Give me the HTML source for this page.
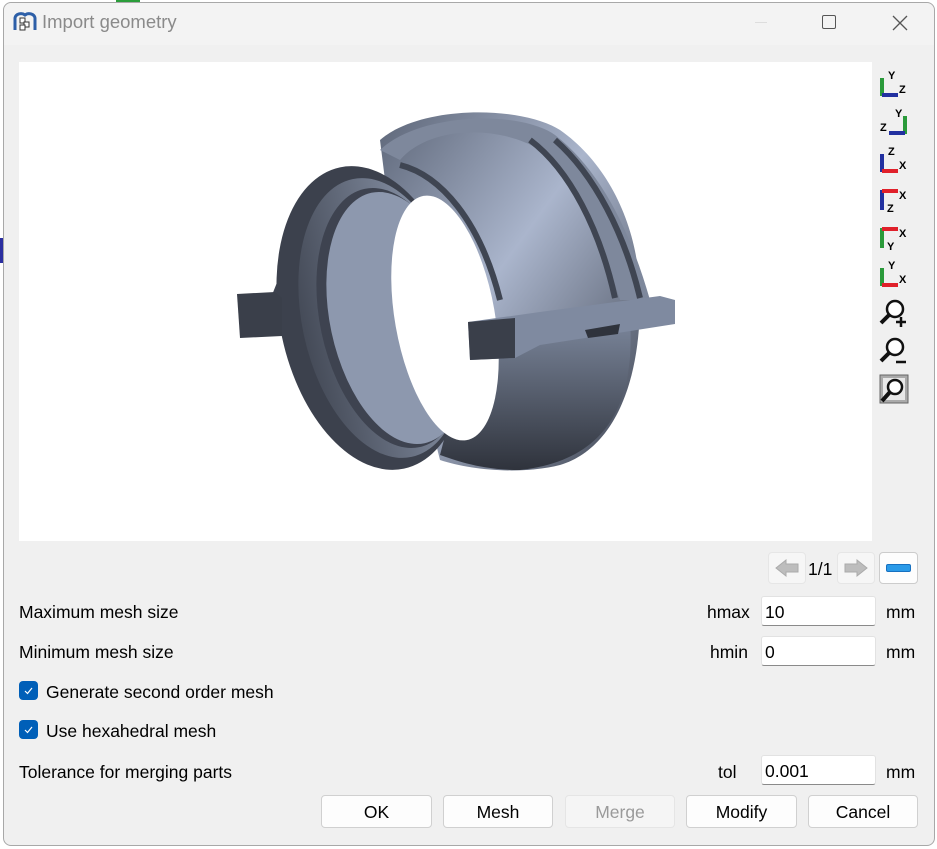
<!DOCTYPE html>
<html><head><meta charset="utf-8"><style>
*{margin:0;padding:0;box-sizing:border-box}
body{width:937px;height:849px;background:#6e6e6e;position:relative;overflow:hidden;font-family:"Liberation Sans",sans-serif;font-size:17.5px;color:#000}
.bg{position:absolute;left:0;top:0;width:937px;height:849px;background:#fff}
.dlg{position:absolute;left:3px;top:2px;width:932px;height:844px;background:#f0f0f0;border:1px solid #a8a8a8;border-radius:8px;overflow:hidden}
.t{position:absolute;white-space:nowrap;line-height:1}
.inp{position:absolute;background:#fff;border:1px solid #e2e2e2;border-bottom:1px solid #8a8a8a;border-radius:3px;padding-left:3px;font-size:17.5px;line-height:30px}
.btn{position:absolute;top:795px;height:33px;background:#fdfdfd;border:1px solid #d0d0d0;border-radius:4px;text-align:center;line-height:33px;font-size:17.5px}
.cb{position:absolute;left:19px;width:19px;height:19px;background:#005fb8;border-radius:4px}
.ic{position:absolute;left:879px}
</style></head><body>
<div class="bg"></div>
<div style="position:absolute;left:116px;top:0;width:24px;height:3px;background:#2a9d3a"></div>
<div style="position:absolute;left:0;top:238px;width:3px;height:25px;background:#2b2fa0"></div>
<div class="dlg"></div>
<div style="position:absolute;left:4px;top:3px;width:930px;height:42px;background:#f3f3f3;border-radius:8px 8px 0 0"></div>
<svg style="position:absolute;left:13px;top:12px" width="24" height="20" viewBox="0 0 24 20"><path d="M2 18V6a6 5 0 0 1 10-3a6 5 0 0 1 10 3v12" fill="none" stroke="#2d5fa8" stroke-width="3"/><rect x="7" y="6" width="5" height="5" fill="#fff" stroke="#333"/><rect x="11" y="10" width="5" height="5" fill="#fff" stroke="#333"/><rect x="7" y="13" width="5" height="5" fill="#fff" stroke="#333"/></svg>
<div class="t" style="left:42px;top:13px;font-size:18.5px;color:#8a8a8a">Import geometry</div>
<div style="position:absolute;left:755px;top:22px;width:12px;height:1px;background:#ddd"></div>
<div style="position:absolute;left:822px;top:15px;width:14px;height:14px;border:1.3px solid #555;border-radius:2px"></div>
<svg style="position:absolute;left:892px;top:15px" width="16" height="16"><path d="M1 1L15 15M15 1L1 15" stroke="#555" stroke-width="1.3"/></svg>
<div style="position:absolute;left:19px;top:62px;width:853px;height:479px;background:#fff"></div>
<svg style="position:absolute;left:19px;top:62px" width="853" height="479" viewBox="19 62 853 479">
<defs>
<linearGradient id="g1" x1="0" y1="0" x2="1" y2="1"><stop offset="0" stop-color="#5d6678"/><stop offset=".45" stop-color="#aab5cc"/><stop offset="1" stop-color="#3d4350"/></linearGradient>
<linearGradient id="g2" x1="0" y1="0" x2="1" y2="0"><stop offset="0" stop-color="#454b58"/><stop offset="1" stop-color="#8d98ad"/></linearGradient>
<linearGradient id="g3" x1="0" y1="0" x2="0" y2="1"><stop offset="0" stop-color="#7b869b"/><stop offset="1" stop-color="#2f333c"/></linearGradient>
</defs>
<path d="M380 140C420 105 520 105 560 130C610 165 640 230 640 300C640 390 610 450 560 465C520 475 470 470 440 460L400 300Z" fill="url(#g1)"/>
<path d="M380 150C420 112 520 110 555 135C600 170 630 230 650 300L620 300C600 235 575 180 540 150C500 125 430 125 400 160Z" fill="#7e889c"/>
<path d="M530 140C570 170 600 230 615 298" stroke="#3f4552" stroke-width="6" fill="none"/>
<path d="M555 140C595 175 625 235 640 298" stroke="#3f4552" stroke-width="6" fill="none"/>
<path d="M400 165C440 175 480 220 500 300" stroke="#3f4552" stroke-width="6" fill="none"/>
<path d="M470 340L630 320C635 400 610 460 520 470C480 470 455 460 440 455Z" fill="url(#g3)"/>
<path d="M270 300L300 225L340 190L300 310Z" fill="#3e4350"/>
<ellipse cx="372" cy="318" rx="92" ry="154" transform="rotate(-12 372 318)" fill="#3c414d"/>
<ellipse cx="382" cy="318" rx="80" ry="142" transform="rotate(-12 382 318)" fill="url(#g2)"/>
<ellipse cx="392" cy="318" rx="72" ry="132" transform="rotate(-12 392 318)" fill="#3e4350"/>
<ellipse cx="398" cy="318" rx="68" ry="128" transform="rotate(-12 398 318)" fill="#8d98ae"/>
<ellipse cx="445" cy="318" rx="50" ry="124" transform="rotate(-10 445 318)" fill="#fff"/>
<path d="M237 294L275 292L282 298L282 336L240 338Z" fill="#3a3f4a"/>
<path d="M468 322L540 312L660 296L675 300L675 324L540 345L515 358L470 360Z" fill="#7f8aa0"/>
<path d="M468 322L515 318L515 358L470 360Z" fill="#3a3f4a"/>
<path d="M585 330L620 324L618 334L588 338Z" fill="#2f333c"/>
</svg>
<svg class="ic" style="top:70px" width="30" height="340" viewBox="0 0 30 340" font-family="Liberation Sans" font-weight="bold" font-size="11">
<g><path d="M3 26V8" stroke="#2a9a3a" stroke-width="4"/><path d="M3 25H19" stroke="#2230a0" stroke-width="4"/><text x="9" y="9">Y</text><text x="20" y="23">Z</text></g>
<g transform="translate(0,38)"><path d="M26 26V8" stroke="#2a9a3a" stroke-width="4"/><path d="M10 25H26" stroke="#2230a0" stroke-width="4"/><text x="1" y="23">Z</text><text x="16" y="9">Y</text></g>
<g transform="translate(0,76)"><path d="M3 26V8" stroke="#2230a0" stroke-width="4"/><path d="M3 25H19" stroke="#e0202a" stroke-width="4"/><text x="9" y="9">Z</text><text x="20" y="23">X</text></g>
<g transform="translate(0,114)"><path d="M3 26V6" stroke="#2230a0" stroke-width="4"/><path d="M3 7H19" stroke="#e0202a" stroke-width="4"/><text x="8" y="28">Z</text><text x="20" y="15">X</text></g>
<g transform="translate(0,152)"><path d="M3 26V6" stroke="#2a9a3a" stroke-width="4"/><path d="M3 7H19" stroke="#e0202a" stroke-width="4"/><text x="8" y="28">Y</text><text x="20" y="15">X</text></g>
<g transform="translate(0,190)"><path d="M3 26V8" stroke="#2a9a3a" stroke-width="4"/><path d="M3 25H19" stroke="#e0202a" stroke-width="4"/><text x="9" y="9">Y</text><text x="20" y="23">X</text></g>
<g transform="translate(0,228)"><circle cx="16" cy="11" r="8" fill="#fff" stroke="#111" stroke-width="2.5"/><path d="M10 17L2 25" stroke="#111" stroke-width="4"/><path d="M22 19V29M17 24H27" stroke="#111" stroke-width="2.5"/></g>
<g transform="translate(0,266)"><circle cx="16" cy="11" r="8" fill="#fff" stroke="#111" stroke-width="2.5"/><path d="M10 17L2 25" stroke="#111" stroke-width="4"/><path d="M17 26H27" stroke="#111" stroke-width="2.5"/></g>
<g transform="translate(0,304)"><rect x="1" y="1" width="28" height="28" fill="#aaa" stroke="#666"/><rect x="4" y="4" width="22" height="22" fill="#e8e8e8"/><circle cx="16" cy="13" r="7" fill="#fff" stroke="#111" stroke-width="2.5"/><path d="M11 18L3 27" stroke="#111" stroke-width="4"/></g>
</svg>
<div style="position:absolute;left:768px;top:552px;width:38px;height:32px;background:#f6f6f6;border:1px solid #e6e6e6;border-radius:4px"></div>
<svg style="position:absolute;left:774px;top:558px" width="26" height="20"><path d="M2 10L12 2V6H24V14H12V18Z" fill="#bdbdbd" stroke="#aaa"/></svg>
<div class="t" style="left:808px;top:561px">1/1</div>
<div style="position:absolute;left:837px;top:552px;width:38px;height:32px;background:#f6f6f6;border:1px solid #e6e6e6;border-radius:4px"></div>
<svg style="position:absolute;left:843px;top:558px" width="26" height="20"><path d="M24 10L14 2V6H2V14H14V18Z" fill="#bdbdbd" stroke="#aaa"/></svg>
<div style="position:absolute;left:879px;top:552px;width:39px;height:32px;background:#fdfdfd;border:1px solid #ccc;border-radius:4px"></div>
<div style="position:absolute;left:886px;top:564px;width:25px;height:8px;background:#2a9ae8;border:1px solid #1670c0;border-radius:2px"></div>
<div class="t" style="left:19px;top:604px">Maximum mesh size</div>
<div class="t" style="left:707px;top:604px">hmax</div>
<div class="inp" style="left:761px;top:596px;width:115px;height:30px">10</div>
<div class="t" style="left:886px;top:604px">mm</div>
<div class="t" style="left:19px;top:644px">Minimum mesh size</div>
<div class="t" style="left:710px;top:644px">hmin</div>
<div class="inp" style="left:761px;top:636px;width:115px;height:30px">0</div>
<div class="t" style="left:886px;top:644px">mm</div>
<div class="cb" style="top:681px"><svg width="19" height="19"><path d="M6 10L8.5 12.5L13 7" stroke="#fff" stroke-width="1.2" fill="none"/></svg></div>
<div class="t" style="left:46px;top:684px">Generate second order mesh</div>
<div class="cb" style="top:720px"><svg width="19" height="19"><path d="M6 10L8.5 12.5L13 7" stroke="#fff" stroke-width="1.2" fill="none"/></svg></div>
<div class="t" style="left:46px;top:723px">Use hexahedral mesh</div>
<div class="t" style="left:19px;top:764px">Tolerance for merging parts</div>
<div class="t" style="left:718px;top:764px">tol</div>
<div class="inp" style="left:761px;top:755px;width:115px;height:30px">0.001</div>
<div class="t" style="left:886px;top:764px">mm</div>
<div class="btn" style="left:321px;width:111px">OK</div>
<div class="btn" style="left:443px;width:110px">Mesh</div>
<div class="btn" style="left:565px;width:110px;background:#f5f5f5;border-color:#e5e5e5;color:#9a9a9a">Merge</div>
<div class="btn" style="left:686px;width:111px">Modify</div>
<div class="btn" style="left:808px;width:110px">Cancel</div>
</body></html>
